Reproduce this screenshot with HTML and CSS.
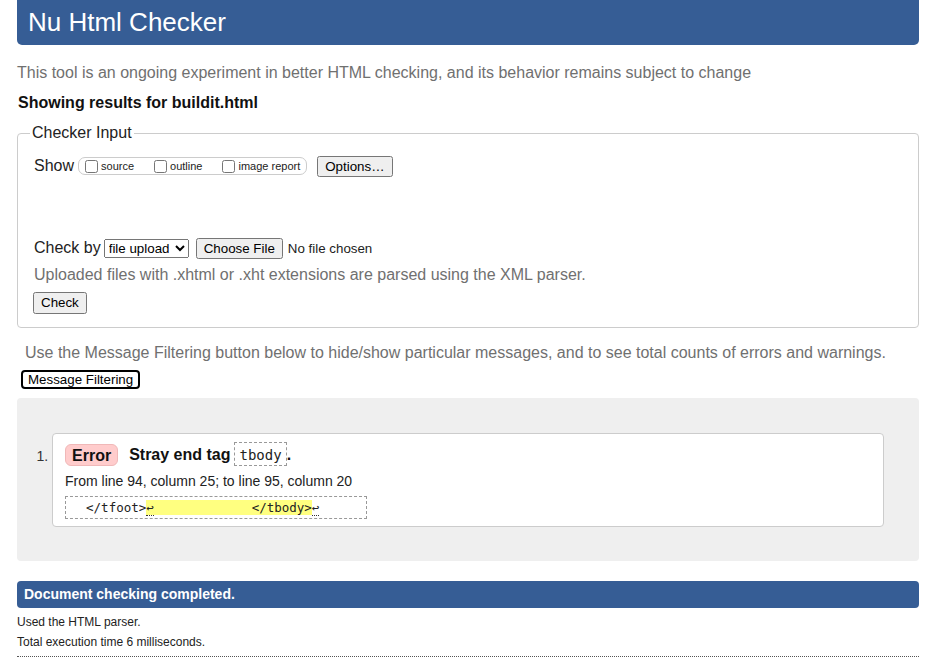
FILE: index.html
```html
<!DOCTYPE html>
<html lang="en">
<head>
<meta charset="utf-8">
<title>Nu Html Checker</title>
<link rel="stylesheet" href="styles.css">
</head>
<body>
<div class="page">
  <h1 class="banner">Nu Html Checker</h1>
  <p class="about">This tool is an ongoing experiment in better HTML checking, and its behavior remains subject to change</p>
  <p class="showing">Showing results for buildit.html</p>
  <fieldset class="input">
    <legend>Checker Input</legend>
    <div class="row show-row">
      <span class="lbl">Show</span>
      <div class="show-box">
        <label class="opt"><input type="checkbox">source</label>
        <label class="opt"><input type="checkbox">outline</label>
        <label class="opt"><input type="checkbox">image report</label>
      </div>
      <button class="btn options">Options…</button>
    </div>
    <div class="row checkby-row">
      <span class="lbl">Check by</span>
      <select class="sel"><option>file upload</option></select>
      <button class="btn choose">Choose File</button>
      <span class="nofile">No file chosen</span>
    </div>
    <p class="hint">Uploaded files with .xhtml or .xht extensions are parsed using the XML parser.</p>
    <button class="btn check">Check</button>
  </fieldset>
  <p class="filter-note">Use the Message Filtering button below to hide/show particular messages, and to see total counts of errors and warnings.</p>
  <button class="filter-btn">Message Filtering</button>
  <div class="results">
    <ol class="messages">
      <li class="message">
        <p class="msg-line"><span class="badge">Error</span><strong class="desc">Stray end tag</strong><code class="tag">tbody</code><strong class="period">.</strong></p>
        <p class="location">From line 94, column 25; to line 95, column 20</p>
        <p class="extract"><code>  &lt;/tfoot&gt;<mark><b class="lf">↩</b>             &lt;/tbody&gt;</mark><b class="lf">↩</b></code></p>
      </li>
    </ol>
  </div>
  <p class="done">Document checking completed.</p>
  <p class="meta first">Used the HTML parser.</p>
  <p class="meta">Total execution time 6 milliseconds.</p>
  <hr class="dotted">
</div>
</body>
</html>
```
FILE: styles.css
```css
html, body {
  margin: 0;
  padding: 0;
  background: #fff;
}
body {
  font-family: "Liberation Sans", Arial, sans-serif;
  font-size: 16px;
  color: #222;
}
.page {
  padding: 0 16px 0 17px;
}
.banner {
  margin: 0;
  height: 45px;
  box-sizing: border-box;
  padding: 1px 0 2px 11px;
  line-height: 42px;
  font-size: 26px;
  font-weight: normal;
  color: #fff;
  background: #365d95;
  border-radius: 0 0 5px 5px;
}
.about {
  margin: 19px 0 0;
  line-height: 18px;
  color: #707070;
}
.showing {
  margin: 12px 0 0 1px;
  line-height: 18px;
  font-weight: bold;
  color: #111;
}
.input {
  margin: 12px 0 0;
  padding: 0 12px 13px;
  border: 1px solid #ccc;
  border-radius: 4px;
}
.input legend {
  padding: 0 2px;
  line-height: 18px;
  color: #222;
}
.row {
  display: flex;
  align-items: center;
  height: 20px;
  padding-left: 4px;
}
.show-row {
  margin-top: 14px;
}
.checkby-row {
  margin-top: 62px;
}
.show-box {
  margin-left: 4px;
  height: 18px;
  box-sizing: border-box;
  border: 1px solid #ccc;
  border-radius: 7px;
  padding: 0 6px 0 2px;
  display: flex;
  align-items: center;
  gap: 16px;
}
.opt {
  display: flex;
  align-items: center;
  font-size: 11px;
  line-height: 13px;
  padding-top: 1px;
}
.opt input {
  margin: 0 3px 1px 4px;
  width: 13px;
  height: 13px;
}
.btn, .sel, .filter-btn {
  font-family: "Liberation Sans", Arial, sans-serif;
  font-size: 13.33px;
}
.btn {
  padding: 1px 6px;
}
.options {
  margin-left: 10px;
}
.sel {
  margin-left: 3px;
  width: 85px;
}
.choose {
  margin-left: 7px;
}
.nofile {
  margin-left: 5px;
  font-size: 13.33px;
}
.hint {
  margin: 7px 0 0;
  padding-left: 4px;
  line-height: 20px;
  color: #707070;
}
.check {
  display: block;
  margin: 7px 0 0 3px;
  padding: 1px 6px 2px;
}
.filter-note {
  margin: 16px 0 0;
  padding-left: 8px;
  line-height: 18px;
  color: #707070;
}
.filter-btn {
  display: block;
  margin: 8px 0 0 4px;
  height: 19px;
  box-sizing: border-box;
  padding: 0 5px;
  border: 2px solid #000;
  border-radius: 4px;
  background: #fff;
  color: #000;
  line-height: 15px;
}
.results {
  margin-top: 9px;
  background: #efefef;
  border-radius: 4px;
  padding: 35px 35px 34px;
}
.messages {
  margin: 0;
  padding: 0;
  list-style: decimal outside;
}
.message {
  background: #fff;
  border: 1px solid #ccc;
  border-radius: 4px;
  padding: 8px 12px 7px;
}
.message::marker {
  font-size: 14px;
  color: #333;
}
.msg-line {
  margin: 0;
  display: flex;
  align-items: center;
  height: 24px;
}
.badge {
  display: inline-block;
  background: #ffcccc;
  border: 1px solid #f0b8b8;
  border-radius: 6px;
  padding: 2px 6px 1px;
  font-weight: bold;
  line-height: 17px;
  margin-right: 11px;
  margin-top: 1px;
  color: #111;
}
.desc {
  margin-right: 4px;
  margin-top: 2px;
  color: #111;
}
.tag {
  font-family: "DejaVu Sans Mono", monospace;
  font-size: 14px;
  line-height: 16px;
  border: 1px dashed #999;
  padding: 4px 4px 2px;
  color: #222;
}
.period {
  margin-top: 2px;
  color: #111;
}
.location {
  margin: 6px 0 0;
  font-size: 14px;
  line-height: 18px;
}
.extract {
  margin: 6px 0 0;
  width: 302px;
  box-sizing: border-box;
  border: 1px dashed #999;
  padding: 2px 5px;
  line-height: 16px;
}
.extract code {
  font-family: "DejaVu Sans Mono", monospace;
  font-size: 12.5px;
  white-space: pre;
  color: #222;
}
.extract mark {
  background: #ffff80;
  color: inherit;
}
.lf {
  font-weight: normal;
  border-bottom: 1px dotted #333;
}
.done {
  margin: 20px 0 0;
  height: 27px;
  line-height: 27px;
  background: #365d95;
  color: #fff;
  font-weight: bold;
  font-size: 14px;
  padding-left: 7px;
  border-radius: 4px;
}
.meta {
  margin: 0;
  font-size: 12px;
  line-height: 20px;
  color: #222;
}
.meta.first {
  margin-top: 4px;
}
.dotted {
  margin: 4px 0 0;
  height: 0;
  border: 0;
  border-top: 1px dotted #555;
}
```
